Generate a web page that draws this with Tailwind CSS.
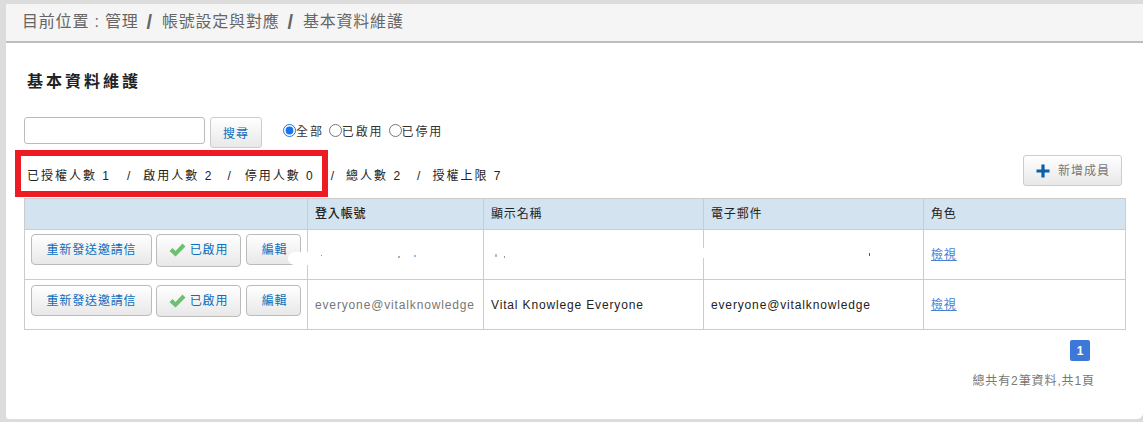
<!DOCTYPE html>
<html lang="zh-Hant">
<head>
<meta charset="utf-8">
<script src="https://cdn.jsdelivr.net/npm/@tailwindcss/browser@4"></script>
</head>
<body class="w-[1143px] h-[422px] overflow-hidden bg-[#dcdcdc] font-['Liberation_Sans','Noto_Sans_CJK_TC',sans-serif]">
<div class="relative ml-[6px] mt-[4px] h-[415px] w-[1137px] bg-white rounded-tl-[3px] rounded-bl-[3px] rounded-br-[6px]">
  <div class="h-[39px] bg-[#f5f5f5] border-b-2 border-[#bdbdbd] pl-[16px] flex items-center gap-[8px] text-[16px] tracking-[0.8px] text-[#666] pb-[1px]">
    <span>目前位置 : 管理</span><span class="font-bold text-[20px]">/</span><span class="ml-[1px]">帳號設定與對應</span><span class="font-bold text-[20px]">/</span><span class="ml-[1px]">基本資料維護</span>
  </div>
  <div class="pl-[18px] pr-[18px]">
    <h1 class="pl-[3px] pt-[27px] text-[16px] leading-[24px] font-bold tracking-[3px] text-[#222]">基本資料維護</h1>
    <div class="mt-[23px] flex items-start h-[31px]">
      <input type="text" class="w-[181px] h-[27px] border border-[#bbb] rounded-[3px] bg-white">
      <button class="ml-[5px] w-[52px] h-[31px] border border-[#ccc] rounded-[3px] bg-gradient-to-b from-white to-[#e8e8e8] text-[12px] tracking-[1px] text-[#0a6ebd] pt-[2px]">搜尋</button>
      <div class="ml-[21px] mt-[4px] flex items-center text-[12px] tracking-[1.9px] text-[#333]">
        <input type="radio" name="s" checked class="w-[13px] h-[13px] m-0 accent-[#1a73e8]"><span class="translate-y-[2px]">全部</span>
        <input type="radio" name="s" class="ml-[5px] w-[13px] h-[13px] m-0"><span class="translate-y-[2px]">已啟用</span>
        <input type="radio" name="s" class="ml-[5px] w-[13px] h-[13px] m-0"><span class="translate-y-[2px]">已停用</span>
      </div>
    </div>
    <div class="mt-[8px] h-[42px] flex items-start justify-between">
      <div class="pl-[3px] pt-[11px] flex text-[12px] leading-[18px] tracking-[2px] text-[#222]">
        <span>已授權人數 1</span><span class="ml-[16px]">/</span><span class="ml-[11px]">啟用人數 2</span><span class="ml-[14px]">/</span><span class="ml-[12px]">停用人數 0</span><span class="ml-[16px]">/</span><span class="ml-[10px]">總人數 2</span><span class="ml-[15px]">/</span><span class="ml-[10px]">授權上限 7</span>
      </div>
      <button class="mr-[3px] -mt-[1px] w-[99px] h-[31px] border border-[#ccc] rounded-[3px] bg-gradient-to-b from-white to-[#e8e8e8] flex items-center pl-[12px] gap-[8px] text-[12px] tracking-[1px] text-[#777]">
        <svg width="14" height="14" viewBox="0 0 14 14" class="text-[#0a5fa8]"><path d="M5.4 0.5h3.2v4.9h4.9v3.2H8.6v4.9H5.4V8.6H0.500V5.4h4.900z" fill="currentColor"/></svg>
        <span>新增成員</span>
      </button>
    </div>
    <table class="w-[1101px] table-fixed border-collapse text-[12px] tracking-[0.85px] text-[#222]">
      <colgroup><col class="w-[283px]"><col class="w-[176px]"><col class="w-[220px]"><col class="w-[220px]"><col class="w-[202px]"></colgroup>
      <thead>
        <tr class="h-[31px] bg-[#d3e3f0] text-left">
          <th class="border border-[#ccc]"></th>
          <th class="border border-[#ccc] px-[7px] font-medium">登入帳號</th>
          <th class="border border-[#ccc] px-[7px] font-normal">顯示名稱</th>
          <th class="border border-[#ccc] px-[7px] font-normal">電子郵件</th>
          <th class="border border-[#ccc] px-[7px] font-normal">角色</th>
        </tr>
      </thead>
      <tbody>
        <tr class="h-[50px]">
          <td class="border border-[#ccc] px-[6px] align-top pt-[4px]">
            <div class="flex gap-[4px] items-start">
              <button class="w-[121px] h-[31px] border border-[#bbb] rounded-[4px] bg-gradient-to-b from-white to-[#e8e8e8] text-[#0a6ebd] text-[12px]">重新發送邀請信</button>
              <button class="w-[85px] h-[33px] border border-[#bbb] rounded-[4px] bg-gradient-to-b from-white to-[#e8e8e8] text-[#0a6ebd] text-[12px] flex items-center justify-center gap-[4px] pb-[1px]">
                <svg width="17" height="14" viewBox="0 0 17 14"><path d="M0.500 8l3-3 3 3L13.500 0.500 16.500 3.500 6.500 13.500z" fill="#6cc070"/></svg><span>已啟用</span>
              </button>
              <button class="ml-[1px] w-[55px] h-[31px] border border-[#bbb] rounded-[4px] bg-gradient-to-b from-white to-[#e8e8e8] text-[#0a6ebd] text-[12px] pl-[2px]">編輯</button>
            </div>
          </td>
          <td class="border border-[#ccc]"></td>
          <td class="border border-[#ccc]"></td>
          <td class="border border-[#ccc]"></td>
          <td class="border border-[#ccc] px-[7px] pt-[1px]"><a href="#" class="underline text-[#4a7fd6]">檢視</a></td>
        </tr>
        <tr class="h-[50px]">
          <td class="border border-[#ccc] px-[6px] align-top pt-[5px]">
            <div class="flex gap-[4px] items-start">
              <button class="w-[121px] h-[31px] border border-[#bbb] rounded-[4px] bg-gradient-to-b from-white to-[#e8e8e8] text-[#0a6ebd] text-[12px]">重新發送邀請信</button>
              <button class="w-[85px] h-[32px] border border-[#bbb] rounded-[4px] bg-gradient-to-b from-white to-[#e8e8e8] text-[#0a6ebd] text-[12px] flex items-center justify-center gap-[4px]">
                <svg width="17" height="14" viewBox="0 0 17 14"><path d="M0.500 8l3-3 3 3L13.500 0.500 16.500 3.500 6.500 13.500z" fill="#6cc070"/></svg><span>已啟用</span>
              </button>
              <button class="ml-[1px] w-[55px] h-[31px] border border-[#bbb] rounded-[4px] bg-gradient-to-b from-white to-[#e8e8e8] text-[#0a6ebd] text-[12px] pl-[2px]">編輯</button>
            </div>
          </td>
          <td class="border border-[#ccc] px-[7px] text-[#777] whitespace-nowrap">everyone@vitalknowledge</td>
          <td class="border border-[#ccc] px-[7px] whitespace-nowrap">Vital Knowlege Everyone</td>
          <td class="border border-[#ccc] px-[7px] whitespace-nowrap">everyone@vitalknowledge</td>
          <td class="border border-[#ccc] px-[7px]"><a href="#" class="underline text-[#4a7fd6]">檢視</a></td>
        </tr>
      </tbody>
    </table>
    <div class="mt-[10px] mr-[18px] flex justify-end">
      <span class="mr-[17px] w-[20px] h-[21px] flex items-center justify-center bg-[#3b78d8] rounded-[2px] text-white text-[12px] font-bold">1</span>
    </div>
    <div class="mt-[11px] mr-[30px] text-right text-[12px] leading-[18px] tracking-[0.9px] text-[#777]">總共有2筆資料,共1頁</div>
  </div>
  <!-- redaction smear over the first data row -->
  <div class="absolute left-[282px] top-[248px] w-[24px] h-[13px] bg-white rounded-l-full"></div>
  <div class="absolute left-[696px] top-[244px] w-[14px] h-[10px] bg-white"></div>
  <div class="absolute left-[315px] top-[251px] w-[1px] h-[1px] bg-[#999]"></div>
  <div class="absolute left-[392px] top-[252px] w-[2px] h-[2px] bg-[#aac]"></div>
  <div class="absolute left-[408px] top-[251px] w-[2px] h-[2px] bg-[#9bd]"></div>
  <div class="absolute left-[489px] top-[250px] w-[2px] h-[3px] bg-[#bbb]"></div>
  <div class="absolute left-[498px] top-[252px] w-[1px] h-[2px] bg-[#999]"></div>
  <div class="absolute left-[863px] top-[249px] w-[1px] h-[3px] bg-[#556]"></div>
  <!-- red annotation box -->
  <div class="absolute left-[9px] top-[146px] w-[313px] h-[47px] border-[6px] border-[#ed1c24]"></div>
</div>
</body>
</html>
